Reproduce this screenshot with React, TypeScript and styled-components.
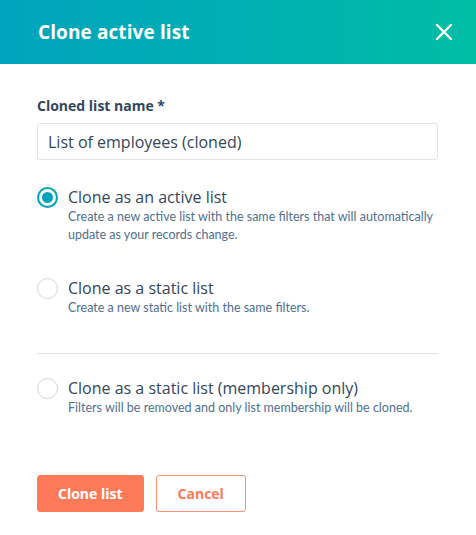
import React, { useState } from "react";
import styled, { createGlobalStyle } from "styled-components";

const Global = createGlobalStyle`
  html, body { margin: 0; padding: 0; background: #ffffff; }
  body { font-family: "Open Sans", "Noto Sans", sans-serif; color: #33475b; }
  * { box-sizing: border-box; }
`;

const Dialog = styled.div`
  width: 476px;
  height: 535px;
  display: flex;
  flex-direction: column;
  background: #fff;
`;

const Header = styled.header`
  height: 64px;
  flex: none;
  display: flex;
  align-items: center;
  justify-content: space-between;
  padding: 0 20px 0 38px;
  background: linear-gradient(90deg, #00a4bd 0%, #00b0b2 55%, #00bda5 100%);
`;

const Title = styled.h1`
  margin: 0;
  font-family: "Open Sans", sans-serif;
  font-size: 19px;
  font-weight: 700;
  color: #fff;
  letter-spacing: 0.1px;
`;

const CloseButton = styled.button`
  width: 24px;
  height: 24px;
  padding: 0;
  border: 0;
  background: none;
  display: flex;
  align-items: center;
  justify-content: center;
  cursor: pointer;
`;

const Body = styled.div`
  flex: 1;
  padding: 33px 38px 0 37px;
  display: flex;
  flex-direction: column;
`;

const Label = styled.label`
  font-size: 14px;
  font-weight: 700;
  color: #33475b;
  line-height: 18px;
`;

const Input = styled.input`
  margin-top: 8px;
  width: 401px;
  height: 37px;
  border: 1px solid #dfe3eb;
  border-radius: 3px;
  background: #fff;
  padding: 0 10px;
  font-family: "Open Sans", sans-serif;
  font-size: 16px;
  color: #33475b;
  outline: none;
`;

const Options = styled.div`
  display: flex;
  flex-direction: column;
  margin-top: 26px;
`;

const Option = styled.label<{ $gap: number }>`
  display: grid;
  grid-template-columns: 21px 1fr;
  column-gap: 10px;
  margin-bottom: ${(p) => p.$gap}px;
  cursor: pointer;
`;

const Radio = styled.span<{ $checked: boolean }>`
  width: 21px;
  height: 21px;
  margin-top: 1px;
  border-radius: 50%;
  border: ${(p) => (p.$checked ? "2px solid #00a4bd" : "1.5px solid #cbd6e2")};
  background: #fff;
  display: flex;
  align-items: center;
  justify-content: center;
  &::after {
    content: "";
    width: 11px;
    height: 11px;
    border-radius: 50%;
    background: #00a4bd;
    display: ${(p) => (p.$checked ? "block" : "none")};
  }
`;

const OptionText = styled.div`
  display: flex;
  flex-direction: column;
`;

const OptionTitle = styled.span`
  font-size: 16px;
  line-height: 22px;
  color: #33475b;
`;

const OptionDesc = styled.span`
  font-family: Lato, "Open Sans", sans-serif;
  font-size: 12.5px;
  line-height: 18px;
  color: #516f90;
`;

const Divider = styled.hr`
  width: 401px;
  margin: 0 0 23px 0;
  border: 0;
  border-top: 1px solid #dfe3eb;
`;

const Footer = styled.div`
  display: flex;
  gap: 12px;
  padding: 0 0 23px 37px;
`;

const Button = styled.button<{ $primary?: boolean }>`
  height: 37px;
  padding: 0 ${(p) => (p.$primary ? 20 : 21)}px;
  border-radius: 3px;
  font-family: "Open Sans", sans-serif;
  font-size: 14px;
  font-weight: 700;
  cursor: pointer;
  border: 1px solid ${(p) => (p.$primary ? "#ff7a59" : "#ff8f73")};
  background: ${(p) => (p.$primary ? "#ff7a59" : "#fff")};
  color: ${(p) => (p.$primary ? "#fff" : "#ff7a59")};
`;

const options = [
  {
    title: "Clone as an active list",
    desc: "Create a new active list with the same filters that will automatically update as your records change.",
    gap: 33,
  },
  {
    title: "Clone as a static list",
    desc: "Create a new static list with the same filters.",
    gap: 36,
  },
];

export default function App() {
  const [selected, setSelected] = useState(0);
  return (
    <>
      <Global />
      <Dialog>
        <Header>
          <Title>Clone active list</Title>
          <CloseButton aria-label="Close">
            <svg width="18" height="18" viewBox="0 0 18 18">
              <path d="M2 2 L16 16 M16 2 L2 16" stroke="#fff" strokeWidth="2.4" strokeLinecap="round" />
            </svg>
          </CloseButton>
        </Header>
        <Body>
          <Label>Cloned list name *</Label>
          <Input defaultValue="List of employees (cloned)" />
          <Options>
            {options.map((o, i) => (
              <Option key={o.title} $gap={o.gap} onClick={() => setSelected(i)}>
                <Radio $checked={selected === i} />
                <OptionText>
                  <OptionTitle>{o.title}</OptionTitle>
                  <OptionDesc>{o.desc}</OptionDesc>
                </OptionText>
              </Option>
            ))}
            <Divider />
            <Option $gap={0} onClick={() => setSelected(2)}>
              <Radio $checked={selected === 2} />
              <OptionText>
                <OptionTitle>Clone as a static list (membership only)</OptionTitle>
                <OptionDesc>Filters will be removed and only list membership will be cloned.</OptionDesc>
              </OptionText>
            </Option>
          </Options>
        </Body>
        <Footer>
          <Button $primary>Clone list</Button>
          <Button>Cancel</Button>
        </Footer>
      </Dialog>
    </>
  );
}
